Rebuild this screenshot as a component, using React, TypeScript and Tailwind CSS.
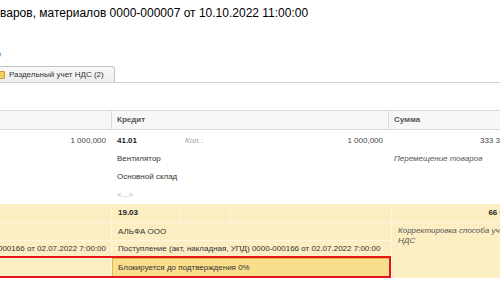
const cols = "grid grid-cols-[111px_68px_49px_160px_137px]";

export default function App() {
  return (
    <div className="relative h-[300px] w-[500px] overflow-hidden bg-white font-['Liberation_Sans',Arial,sans-serif] text-[8px] text-[#333]">
      <div className="-ml-[12px] h-[26px] whitespace-nowrap pt-[6px] text-[12px] leading-[14px] text-black">
        товаров, материалов 0000-000007 от 10.10.2022 11:00:00
      </div>

      <div className="h-[40px] pt-[23px]">
        <span className="-ml-[4px] block text-[9px] leading-[10px] text-[#4a6fa5]">о</span>
      </div>

      {/* tabs */}
      <div className="flex h-[17px] border-b border-[#cfcfcf]">
        <div className="-ml-[6px] flex w-[121px] items-center gap-[4px] rounded-tr-[3px] border border-b-0 border-[#c4c4c4] bg-gradient-to-b from-[#fafafa] to-[#ececec] pl-[3px] pr-[4px]">
          <span className="h-[8px] w-[7px] shrink-0 rounded-[1px] border border-[#c99a2e] bg-[#f4cf5c]" />
          <span className="whitespace-nowrap leading-[10px] text-[#333]">Раздельный учет НДС (2)</span>
        </div>
      </div>

      <div className="h-[27px]" />

      {/* header */}
      <div className={`${cols} h-[20px] border-y border-[#dadada] bg-[#f7f7f7] leading-[18px] text-[#555]`}>
        <div />
        <div className="col-span-3 border-l border-[#dadada] pl-[5px] font-bold">Кредит</div>
        <div className="border-l border-[#dadada] pl-[5px] font-bold">Сумма</div>
      </div>

      {/* white record */}
      <div className={`${cols} h-[74px] auto-rows-[18px] pt-[2px] leading-[18px]`}>
        <div className="pr-[5px] text-right text-[#444]">1 000,000</div>
        <div className="pl-[6px] font-bold text-[#222]">41.01</div>
        <div className="pl-[6px] italic text-[#a0a0a0]">Кол.:</div>
        <div className="pr-[5px] text-right text-[#444]">1 000,000</div>
        <div className="whitespace-nowrap pr-[5px] text-right text-[#444]">333 333,33</div>

        <div />
        <div className="col-span-3 pl-[6px]">Вентилятор</div>
        <div className="pl-[6px] italic text-[#555]">Перемещение товаров</div>

        <div />
        <div className="col-span-3 pl-[6px]">Основной склад</div>
        <div />

        <div />
        <div className="col-span-3 pl-[6px] text-[#aaa]">&lt;...&gt;</div>
        <div />
      </div>

      {/* yellow record */}
      <div className="relative">
        <div className={`${cols} grid-rows-[18px_17px_16px_20px] gap-[1px] bg-[#fdf6dd] leading-[17px]`}>
          <div className="bg-[#fbeec3]" />
          <div className="bg-[#fbeec3] pl-[6px] font-bold text-[#222]">19.03</div>
          <div className="bg-[#fbeec3]" />
          <div className="bg-[#fbeec3]" />
          <div className="whitespace-nowrap bg-[#fbeec3] pr-[5px] text-right font-bold text-[#222]">66 666,67</div>

          <div className="bg-[#fbeec3]" />
          <div className="col-span-3 bg-[#fbeec3] pl-[6px]">АЛЬФА ООО</div>
          <div className="row-span-3 bg-[#fbeec3] pl-[6px] pt-[3px] italic leading-[10px] text-[#555]">
            Корректировка способа учета НДС
          </div>

          <div className="flex justify-end overflow-hidden whitespace-nowrap bg-[#fbeec3] pr-[5px] leading-[16px]">
            <span>Поступление (акт, накладная, УПД) 0000-000166 от 02.07.2022 7:00:00</span>
          </div>
          <div className="col-span-3 whitespace-nowrap bg-[#fbeec3] pl-[6px] leading-[16px]">
            Поступление (акт, накладная, УПД) 0000-000166 от 02.07.2022 7:00:00
          </div>

          <div className="bg-[#fbeec3]" />
          <div className="col-span-3 border border-[#e3b447] bg-[#f9df8c] pl-[5px] leading-[17px] text-[#333]">
            Блокируется до подтверждения 0%
          </div>
        </div>
        {/* red highlight */}
        <div className="pointer-events-none absolute bottom-0 left-[-4px] h-[22px] w-[395px] border-2 border-[#e8141b]" />
      </div>
    </div>
  );
}
